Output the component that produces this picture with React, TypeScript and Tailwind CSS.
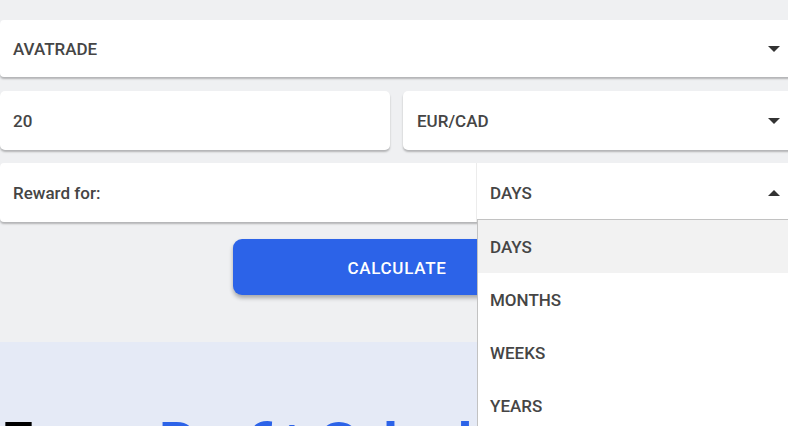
import React from "react";

const Down = () => (
  <svg width="12" height="6" viewBox="0 0 12 6" className="block">
    <path d="M0 0 L12 0 L6 6 Z" fill="#333" />
  </svg>
);
const Up = () => (
  <svg width="12" height="6" viewBox="0 0 12 6" className="block">
    <path d="M0 6 L12 6 L6 0 Z" fill="#333" />
  </svg>
);

export default function App() {
  const font = { fontFamily: "Roboto, 'Liberation Sans', sans-serif" };
  const label = "text-[17px] font-medium text-[#454545] pt-[3px]";
  return (
    <div className="w-[788px] h-[426px] overflow-hidden bg-[#eff0f2] relative" style={font}>
      <div className="w-[800px] flex flex-col">
        <div className="h-[20px]" />
        <div className="h-[57px] bg-white rounded-l-[4px] shadow-[0_2px_2px_rgba(0,0,0,0.25)] flex items-center pl-[13px] pr-[20px]">
          <span className={`flex-1 ${label}`}>AVATRADE</span>
          <Down />
        </div>
        <div className="h-[14px]" />
        <div className="flex gap-[13px] h-[59px]">
          <div className="w-[390px] bg-white rounded-[5px] shadow-[0_2px_2px_rgba(0,0,0,0.25)] flex items-center pl-[13px]">
            <span className={label}>20</span>
          </div>
          <div className="flex-1 bg-white rounded-l-[5px] shadow-[0_2px_2px_rgba(0,0,0,0.25)] flex items-center pl-[14px] pr-[20px]">
            <span className={`flex-1 ${label}`}>EUR/CAD</span>
            <Down />
          </div>
        </div>
        <div className="h-[13px]" />
        <div className="h-[59px] bg-white rounded-l-[4px] shadow-[0_2px_2px_rgba(0,0,0,0.25)] flex">
          <div className="w-[476px] flex items-center pl-[13px]">
            <span className={label}>Reward for:</span>
          </div>
          <div className="flex-1 border-l border-[#ececec] flex items-center pl-[13px] pr-[20px]">
            <span className={`flex-1 ${label}`}>DAYS</span>
            <Up />
          </div>
        </div>
        <div className="h-[17px]" />
        <div className="flex justify-start pl-[233px]">
          <button className="w-[328px] h-[56px] pt-[3px] rounded-[9px] bg-[#2c63e8] text-white text-[17px] font-medium tracking-[0.7px] shadow-[0_3px_4px_rgba(0,0,0,0.3)]">
            CALCULATE
          </button>
        </div>
        <div className="h-[47px]" />
        <div className="h-[200px] bg-[#e5eaf6] pt-[72px]">
          <div
            className="text-[57px] font-black leading-none whitespace-nowrap pl-[1px]"
            style={{ fontFamily: "Lato, 'Liberation Sans', sans-serif" }}
          >
            <span className="text-black">Forex </span>
            <span className="text-[#2c63e8]">Profit Calculator</span>
          </div>
        </div>
      </div>
      <div className="absolute left-[477px] top-[219px] w-[320px] bg-white border-l border-t border-[#c2c2c2] flex flex-col">
        <div className={`h-[53px] bg-[#f2f2f2] flex items-center pl-[12px] ${label}`}>DAYS</div>
        <div className={`h-[53px] flex items-center pl-[12px] ${label}`}>MONTHS</div>
        <div className={`h-[53px] flex items-center pl-[12px] ${label}`}>WEEKS</div>
        <div className={`h-[53px] flex items-center pl-[12px] ${label}`}>YEARS</div>
      </div>
    </div>
  );
}
